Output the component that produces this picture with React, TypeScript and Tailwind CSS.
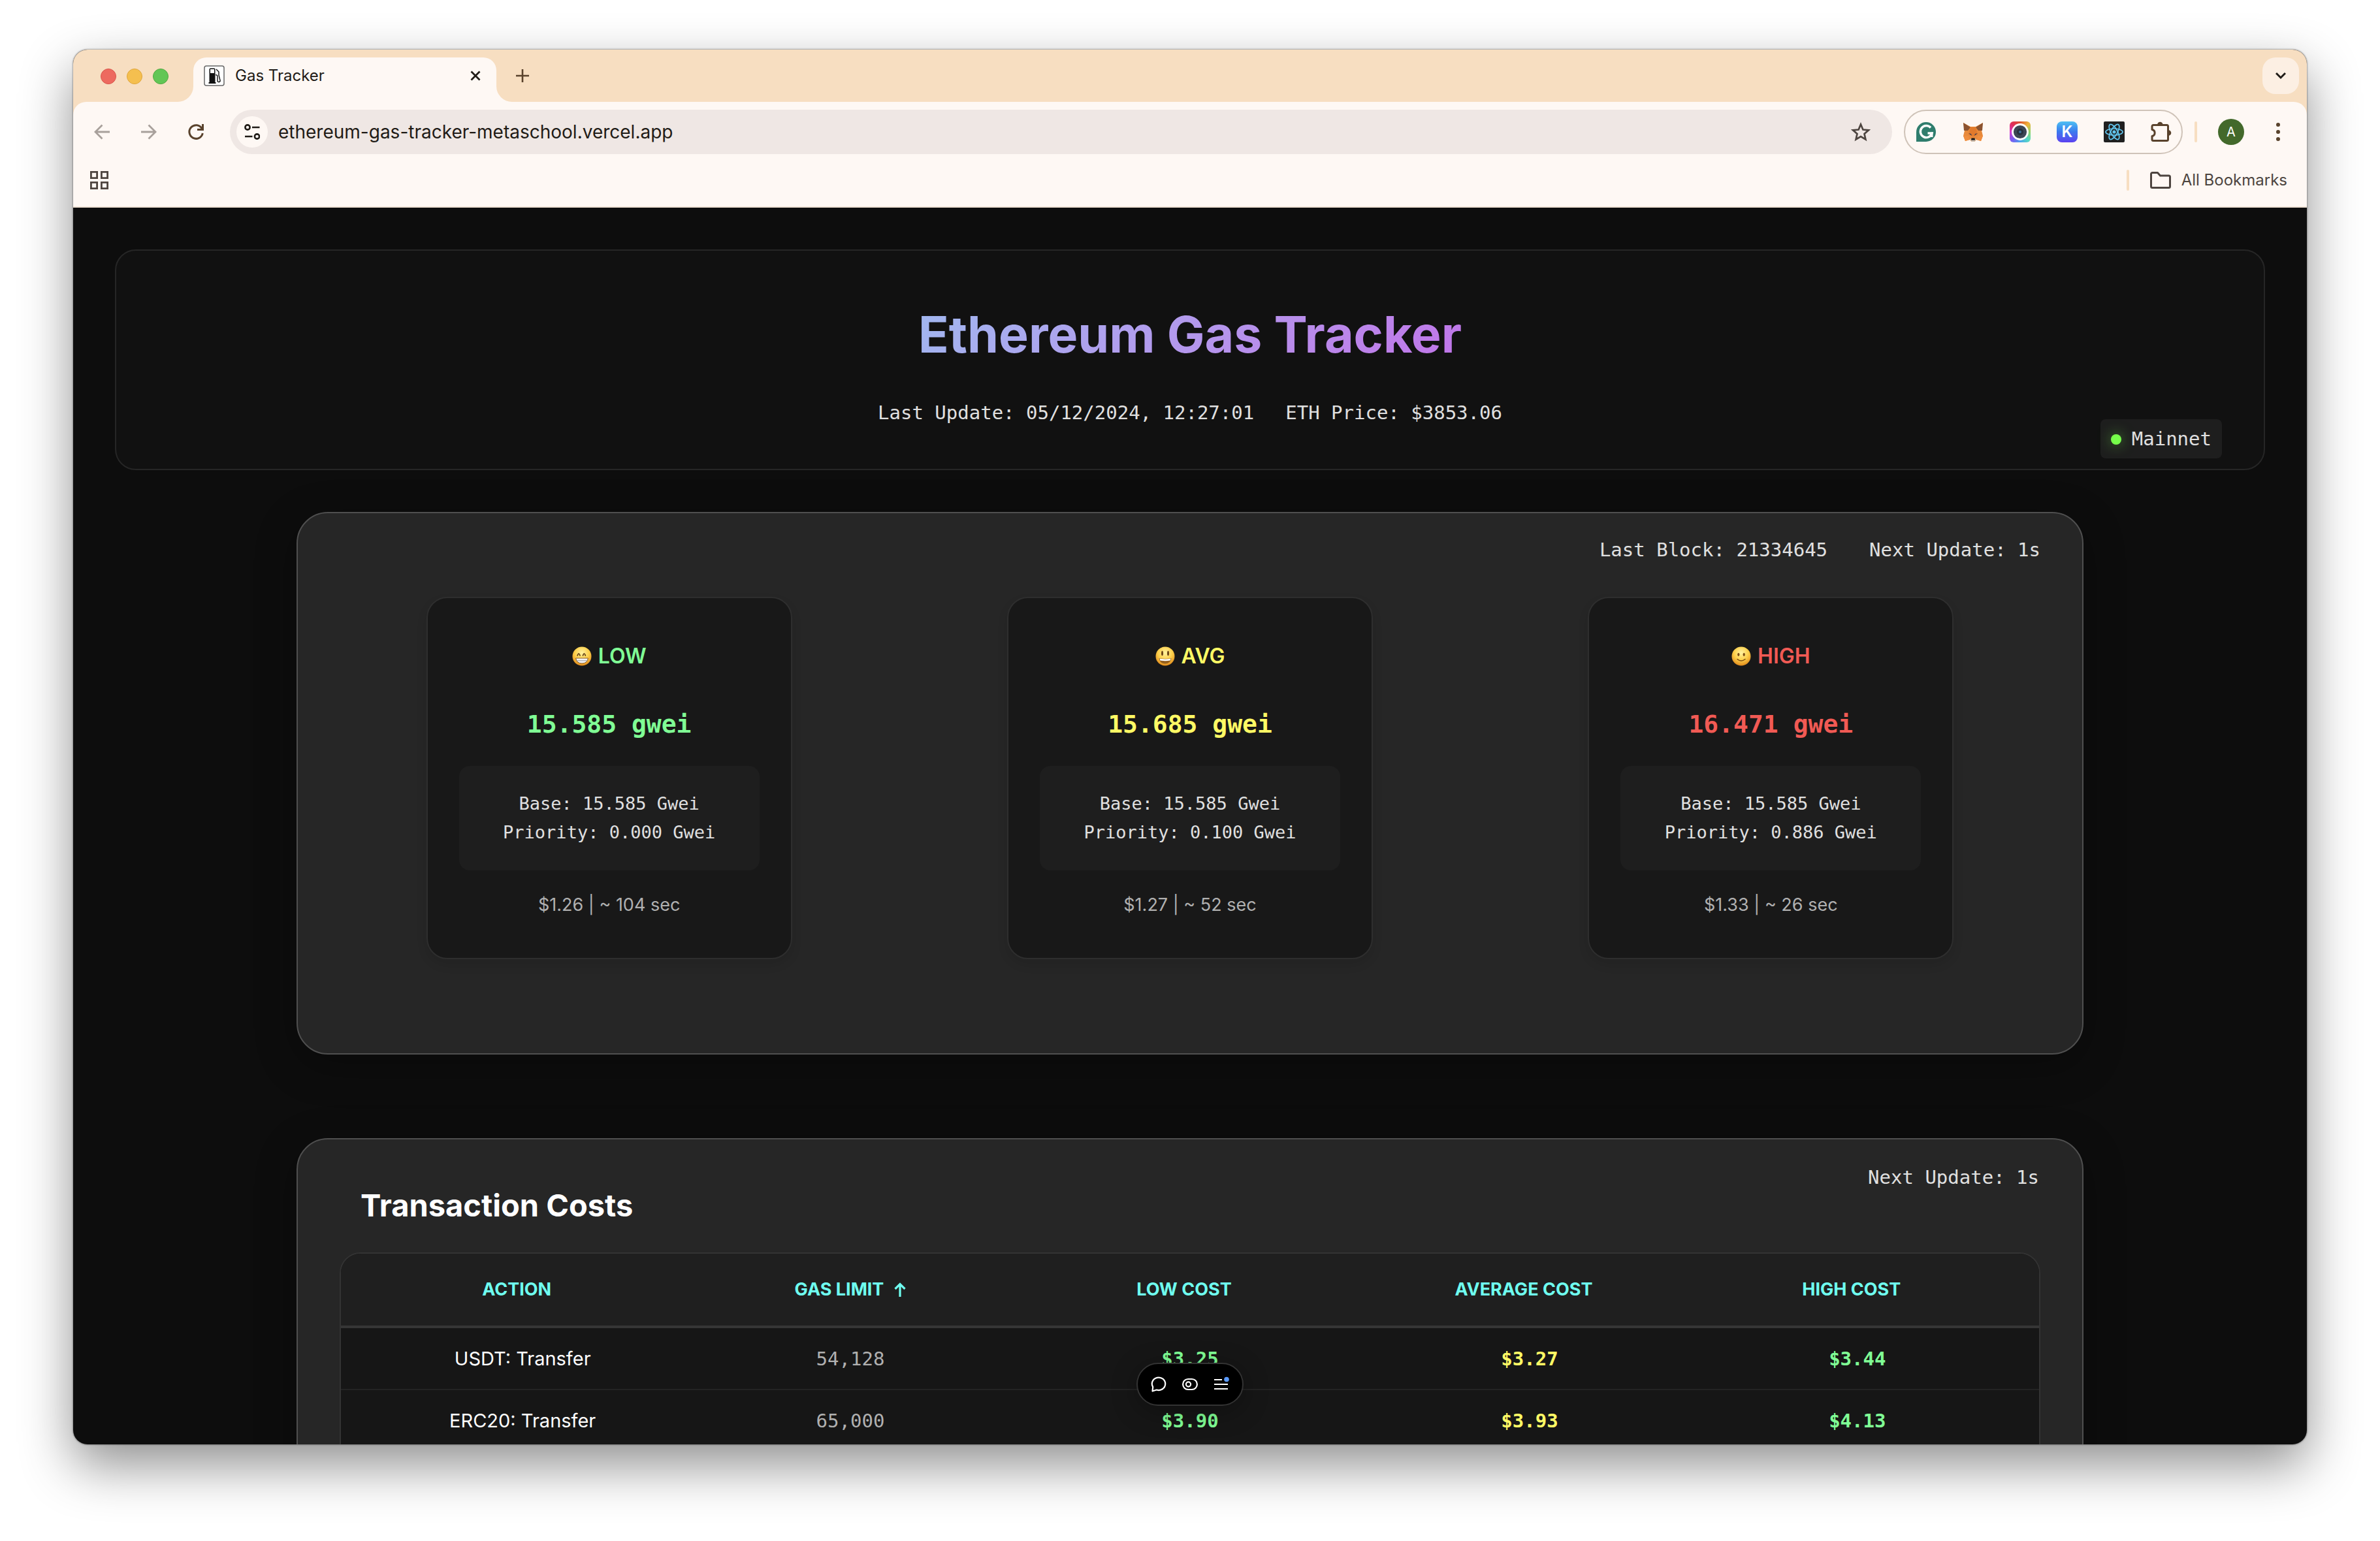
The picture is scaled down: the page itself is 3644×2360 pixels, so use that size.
import type { ReactNode } from "react";

type Tone = "green" | "yellow" | "red";

const toneText: Record<Tone, string> = {
  green: "text-[#80ff95]",
  yellow: "text-[#fffa65]",
  red: "text-[#f15a54]",
};

const mono = "font-['DejaVu_Sans_Mono',monospace]";

/* ---------- icons ---------- */

function FuelIcon() {
  return (
    <svg viewBox="0 0 32 32" className="size-8" aria-hidden="true">
      <rect x="1" y="1" width="30" height="30" rx="3" fill="#fff" stroke="#666" strokeWidth="1.5" />
      <rect x="8.5" y="4.5" width="9" height="22" rx="1.5" fill="#111" />
      <rect x="10" y="6" width="6" height="6" fill="#fff" />
      <rect x="7.500" y="26" width="11" height="2" fill="#111" />
      <path d="M19 6l4 4v5l2 8a2 2 0 0 1-4 1v-7a2 2 0 0 0-3-2" fill="none" stroke="#111" strokeWidth="1.400" />
    </svg>
  );
}

function BackIcon() {
  return (
    <svg viewBox="0 0 24 24" className="size-6" fill="none" stroke="#a8a09b" strokeWidth="2.800" aria-hidden="true">
      <path d="M24 12H2M12.500 1.500L2 12l10.500 10.500" />
    </svg>
  );
}

function ForwardIcon() {
  return (
    <svg viewBox="0 0 24 24" className="size-6" fill="none" stroke="#a8a09b" strokeWidth="2.800" aria-hidden="true">
      <path d="M0 12h22M11.500 1.500L22 12 11.500 22.500" />
    </svg>
  );
}

function ReloadIcon() {
  return (
    <svg viewBox="0 0 24 24" className="size-6" fill="none" stroke="#59422c" strokeWidth="3" aria-hidden="true">
      <path d="M21.200 7A10.300 10.300 0 1 0 22.300 14" />
      <path d="M22.500 0v8.500H14" />
    </svg>
  );
}

function SiteInfoIcon() {
  return (
    <svg viewBox="0 0 24 24" className="size-6" fill="none" stroke="#1f1b16" strokeWidth="2.600" aria-hidden="true">
      <circle cx="5" cy="5" r="3.600" />
      <path d="M12 5h11.500M1 19h11.500" />
      <circle cx="19.500" cy="19" r="3.600" />
    </svg>
  );
}

function StarIcon() {
  return (
    <svg viewBox="0 0 32 32" className="size-8" fill="none" stroke="#4d4540" strokeWidth="2.700" aria-hidden="true">
      <path d="M16 4.500l3.400 8 8.600.8-6.500 5.700 1.900 8.500L16 23l-7.400 4.500 1.900-8.500L4 13.300l8.600-.8z" />
    </svg>
  );
}

function GrammarlyIcon() {
  return (
    <svg viewBox="0 0 32 32" className="size-8" aria-hidden="true">
      <path d="M1 31V16A15 15 0 1 1 16 31z" fill="#2f7d6d" />
      <path d="M23 9.500A9 9 0 1 0 25 18h-6.500" fill="none" stroke="#fff" strokeWidth="3.400" />
      <path d="M25 16.500v7.500" stroke="#fff" strokeWidth="3" />
    </svg>
  );
}

function FoxIcon() {
  return (
    <svg viewBox="0 0 32 32" className="size-8" aria-hidden="true">
      <path d="M1 2l11 6h8l11-6-2 12 2 8-3 8-7-2-3 3h-4l-3-3-7 2-3-8 2-8z" fill="#e8893a" />
      <path d="M1 2l11 7-4 5-6 0zM31 2L20 9l4 5 6 0z" fill="#8b5330" />
      <path d="M1 22h8l1 6-6 2zM31 22h-8l-1 6 6 2z" fill="#ef8d3e" />
      <path d="M12 9h8l3 11-7 3-7-3z" fill="#e17a2c" />
      <path d="M9 18l4 1 1 3zM23 18l-4 1-1 3z" fill="#3b3b52" />
      <path d="M11 27l3-1h4l3 1-3 4h-4z" fill="#c9bcae" />
      <path d="M13.500 25.500h5l.5 3h-6z" fill="#161616" />
    </svg>
  );
}

function CameraIcon() {
  return (
    <span className="grid size-8 place-items-center rounded-md bg-[conic-gradient(from_45deg,#f0b23a,#8fd46a,#55d8c4,#4aa3f0,#7a5cf0,#d63ad0,#e0305a,#e0502a,#f0b23a)]">
      <svg viewBox="0 0 32 32" className="size-8" aria-hidden="true">
        <circle cx="16" cy="16" r="11.500" fill="#3c4654" stroke="#fff" strokeWidth="2.800" />
        <circle cx="16" cy="16" r="5" fill="#27313e" />
        <circle cx="16" cy="16" r="2" fill="#3f6f96" />
      </svg>
    </span>
  );
}

function ReactIcon() {
  return (
    <svg viewBox="0 0 32 32" className="size-8" aria-hidden="true">
      <rect width="32" height="32" rx="2" fill="#202020" />
      <g fill="none" stroke="#61c5ee" strokeWidth="1.700">
        <ellipse cx="16" cy="16" rx="13" ry="5" />
        <ellipse cx="16" cy="16" rx="13" ry="5" transform="rotate(60 16 16)" />
        <ellipse cx="16" cy="16" rx="13" ry="5" transform="rotate(120 16 16)" />
      </g>
      <circle cx="16" cy="16" r="2.600" fill="#61c5ee" />
    </svg>
  );
}

function PuzzleIcon() {
  return (
    <svg viewBox="0 0 34 32" className="h-8 w-[34px]" aria-hidden="true">
      <path
        d="M2 7.500A2 2 0 0 1 4 5.500H24.500a2 2 0 0 1 2 2V27.500a2 2 0 0 1-2 2H4a2 2 0 0 1-2-2V22.500C7.500 21.500 7.500 13.500 2 12.500z"
        fill="none"
        stroke="#59422c"
        strokeWidth="3"
        strokeLinejoin="round"
      />
      <path d="M10 5a4.300 4.300 0 0 1 8.600 0zM27 13.200a4.300 4.300 0 0 1 0 8.600z" fill="#59422c" />
    </svg>
  );
}

function DotsIcon() {
  return (
    <svg viewBox="0 0 8 28" className="h-7 w-2" fill="#59422c" aria-hidden="true">
      <circle cx="4" cy="3" r="3" />
      <circle cx="4" cy="14" r="3" />
      <circle cx="4" cy="25" r="3" />
    </svg>
  );
}

function GridIcon() {
  return (
    <svg viewBox="0 0 28 28" className="size-7" fill="none" stroke="#4d4540" strokeWidth="2.800" aria-hidden="true">
      <path d="M1.400 1.400h9.200v9.200H1.400zM17.400 1.400h9.200v9.200h-9.200zM1.400 17.400h9.200v9.200H1.400zM17.400 17.400h9.200v9.200h-9.200z" />
    </svg>
  );
}

function FolderIcon() {
  return (
    <svg viewBox="0 0 32 26" className="h-[26px] w-8" fill="none" stroke="#4d4540" strokeWidth="3" strokeLinejoin="round" aria-hidden="true">
      <path d="M1.500 3.500a2 2 0 0 1 2-2H11.500l4 4.500H28.500a2 2 0 0 1 2 2V22.500a2 2 0 0 1-2 2H3.500a2 2 0 0 1-2-2z" />
    </svg>
  );
}

type Mood = "grin" | "open" | "smile";

function Face({ mood }: { mood: Mood }) {
  return (
    <svg viewBox="0 0 30 30" className="size-[30px]" aria-hidden="true">
      <defs>
        <radialGradient id={`face-${mood}`} cx="50%" cy="32%" r="68%">
          <stop offset="0" stopColor="#fff3a0" />
          <stop offset="0.550" stopColor="#fccf4a" />
          <stop offset="1" stopColor="#e08a1c" />
        </radialGradient>
      </defs>
      <circle cx="15" cy="15" r="14.500" fill={`url(#face-${mood})`} />
      {mood === "grin" && (
        <>
          <path d="M8.200 14q1.800-6 3.800 0M16.500 14q1.800-6 3.800 0" fill="none" stroke="#5d3a12" strokeWidth="1.700" strokeLinecap="round" />
          <path d="M5.500 18H24.500q-1.500 8-9.500 8t-9.500-8z" fill="#f4f4f4" stroke="#8a5a20" strokeWidth="1" />
          <path d="M6.500 21.800h17" stroke="#9b9b9b" strokeWidth="1" />
        </>
      )}
      {mood === "open" && (
        <>
          <ellipse cx="10.500" cy="10.500" rx="1.500" ry="3.800" fill="#6b4414" />
          <ellipse cx="19.500" cy="10.500" rx="1.500" ry="3.800" fill="#6b4414" />
          <path d="M5.500 18Q15 20 24.500 18q-1.500 8.500-9.500 8.500t-9.500-8.500z" fill="#95601e" />
          <path d="M6.500 18.500q8.500 1.800 17 0l-.8 3q-7.700 1.500-15.400 0z" fill="#fff" />
        </>
      )}
      {mood === "smile" && (
        <>
          <ellipse cx="10.800" cy="12.500" rx="1.600" ry="2.400" fill="#7a4a12" />
          <ellipse cx="19.200" cy="12.500" rx="1.600" ry="2.400" fill="#7a4a12" />
          <path d="M9 19.500q6 5 12 0" fill="none" stroke="#7a4a12" strokeWidth="1.400" strokeLinecap="round" />
        </>
      )}
    </svg>
  );
}

/* ---------- browser chrome ---------- */

function TabFoot({ side }: { side: "left" | "right" }) {
  return (
    <svg viewBox="0 0 24 24" className="size-6 self-end" fill="#fef8f4" aria-hidden="true">
      {side === "left" ? <path d="M24 0v24H0A24 24 0 0 0 24 0z" /> : <path d="M0 0v24h24A24 24 0 0 1 0 0z" />}
    </svg>
  );
}

function TabStrip() {
  return (
    <div className="flex h-20 shrink-0 bg-[#f7dec1] pt-3 pr-3 pl-[42px]">
      <div className="flex h-[58px] items-center gap-4">
        <button aria-label="Close window" className="size-6 rounded-full border border-[#d9574c] bg-[#ed6a5f]" />
        <button aria-label="Minimize window" className="size-6 rounded-full border border-[#dfa63d] bg-[#f5bf4f]" />
        <button aria-label="Zoom window" className="size-6 rounded-full border border-[#52a843] bg-[#62c655]" />
      </div>
      <div className="ml-[14px] flex">
        <TabFoot side="left" />
        <div className="flex w-[464px] items-center rounded-t-[20px] bg-[#fef8f4] pr-5 pb-3 pl-4">
          <FuelIcon />
          <span className="ml-4 flex-1 text-2xl text-[#1f1b16]">Gas Tracker</span>
          <button aria-label="Close tab" className="grid size-6 place-items-center">
            <svg viewBox="0 0 16 16" className="size-4" stroke="#1f1b16" strokeWidth="2.800" aria-hidden="true">
              <path d="M1.500 1.500l13 13M14.500 1.500l-13 13" />
            </svg>
          </button>
        </div>
        <TabFoot side="right" />
      </div>
      <button aria-label="New tab" className="ml-[6px] grid h-14 w-5 place-items-center">
        <svg viewBox="0 0 20 20" className="size-5" stroke="#59422c" strokeWidth="2.600" aria-hidden="true">
          <path d="M10 0v20M0 10h20" />
        </svg>
      </button>
      <button aria-label="Search tabs" className="ml-auto grid size-14 place-items-center rounded-[20px] bg-[#fcefe3]">
        <svg viewBox="0 0 16 12" className="h-3 w-4" fill="none" stroke="#1f1b16" strokeWidth="3" aria-hidden="true">
          <path d="M1 2l7 7 7-7" />
        </svg>
      </button>
    </div>
  );
}

function ToolButton({ label, children }: { label: string; children: ReactNode }) {
  return (
    <button aria-label={label} className="grid h-12 w-8 place-items-center">
      {children}
    </button>
  );
}

function Toolbar() {
  return (
    <div className="bg-[#f7dec1]">
      <div className="flex h-[92px] items-center rounded-t-[20px] bg-[#fef8f4] pr-10 pl-7">
        <div className="flex gap-10">
          <ToolButton label="Back">
            <BackIcon />
          </ToolButton>
          <ToolButton label="Forward">
            <ForwardIcon />
          </ToolButton>
          <ToolButton label="Reload">
            <ReloadIcon />
          </ToolButton>
        </div>
        <div className="ml-9 flex h-[68px] flex-1 items-center rounded-full bg-[#efe7e4] pr-8 pl-[10px]">
          <button aria-label="View site information" className="grid size-12 place-items-center rounded-full bg-[#fef8f4]">
            <SiteInfoIcon />
          </button>
          <input
            aria-label="Address"
            readOnly
            value="ethereum-gas-tracker-metaschool.vercel.app"
            className="ml-4 flex-1 bg-transparent text-[28px] text-[#1f1b16] outline-none"
          />
          <button aria-label="Bookmark this page">
            <StarIcon />
          </button>
        </div>
        <div className="ml-[18px] flex h-[68px] items-center gap-10 rounded-full border-2 border-[#cfc3b8] pr-[13px] pl-4">
          <button aria-label="Grammarly">
            <GrammarlyIcon />
          </button>
          <button aria-label="MetaMask">
            <FoxIcon />
          </button>
          <button aria-label="Screen capture">
            <CameraIcon />
          </button>
          <button
            aria-label="Keplr"
            className="grid size-8 place-items-center rounded-lg bg-linear-to-b from-[#4fc0f2] via-[#3b78ee] to-[#5a3ff0] text-2xl leading-8 font-semibold text-white"
          >
            K
          </button>
          <button aria-label="React Developer Tools">
            <ReactIcon />
          </button>
          <button aria-label="Extensions">
            <PuzzleIcon />
          </button>
        </div>
        <div className="ml-[18px] h-8 w-1 rounded-full bg-[#f7dec1]" />
        <button aria-label="Profile" className="ml-8 size-10 rounded-full bg-[#43692b] text-xl text-white">
          A
        </button>
        <button aria-label="Menu" className="ml-12">
          <DotsIcon />
        </button>
      </div>
    </div>
  );
}

function BookmarksBar() {
  return (
    <div className="flex h-[70px] shrink-0 items-start border-b-2 border-[#f0e3d6] bg-[#fef8f4] pt-3 pr-[30px] pl-[26px]">
      <button aria-label="Tab groups" className="flex h-8 items-center">
        <GridIcon />
      </button>
      <div className="ml-auto h-8 w-1 rounded-full bg-[#f7dec1]" />
      <button className="ml-8 flex h-8 items-center gap-4 text-2xl text-[#4d4540]">
        <FolderIcon />
        All Bookmarks
      </button>
    </div>
  );
}

/* ---------- page ---------- */

function Header() {
  return (
    <header className="relative rounded-[32px] border-2 border-[#262626] bg-[#111] pt-20 pb-16 text-center">
      <h1 className="mx-auto w-fit bg-linear-135 from-[#a0b8f0] to-[#c074e8] bg-clip-text text-[77px] leading-[96px] font-bold text-transparent">
        Ethereum Gas Tracker
      </h1>
      <div className={`mt-[50px] flex justify-center gap-12 text-[29px] leading-[44px] text-[#e0e0e0] ${mono}`}>
        <span>Last Update: 05/12/2024, 12:27:01</span>
        <span>ETH Price: $3853.06</span>
      </div>
      <div
        className={`absolute right-16 bottom-4 flex h-[60px] items-center gap-4 rounded-lg bg-[#1e1e1e] px-4 pt-[2px] text-[29px] text-[#e0e0e0] ${mono}`}
      >
        <span className="size-4 rounded-full bg-[#76ff4a] shadow-[0_0_20px_#76ff4a80]" />
        Mainnet
      </div>
    </header>
  );
}

const panel =
  "mx-auto w-[2736px] max-w-full rounded-[48px] border-2 border-[#4f4f4f] bg-[#262626] shadow-[0_16px_64px_rgba(0,0,0,0.3)]";

interface GasTier {
  name: string;
  mood: Mood;
  tone: Tone;
  price: string;
  base: string;
  priority: string;
  usd: string;
  wait: string;
}

const tiers: GasTier[] = [
  { name: "LOW", mood: "grin", tone: "green", price: "15.585", base: "15.585", priority: "0.000", usd: "$1.26", wait: "104" },
  { name: "AVG", mood: "open", tone: "yellow", price: "15.685", base: "15.585", priority: "0.100", usd: "$1.27", wait: "52" },
  { name: "HIGH", mood: "smile", tone: "red", price: "16.471", base: "15.585", priority: "0.886", usd: "$1.33", wait: "26" },
];

function GasCard({ tier }: { tier: GasTier }) {
  return (
    <article className="w-[560px] rounded-[32px] border-2 border-[#2e2e2e] bg-[#181818] px-12 pt-16 pb-[59px] text-center shadow-[0_8px_16px_rgba(0,0,0,0.1)]">
      <h2 className={`flex items-center justify-center gap-[10px] text-[32px] leading-[50px] font-semibold ${toneText[tier.tone]}`}>
        <Face mood={tier.mood} />
        {tier.name}
      </h2>
      <p className={`mt-12 text-[38px] leading-[62px] font-bold ${mono} ${toneText[tier.tone]}`}>{tier.price} gwei</p>
      <div className={`mt-[33px] rounded-2xl bg-[#1e1e1e] py-9 text-[27px] leading-[44px] text-[#e0e0e0] ${mono}`}>
        <p>Base: {tier.base} Gwei</p>
        <p>Priority: {tier.priority} Gwei</p>
      </div>
      <p className="mt-[31px] text-[27px] leading-[44px] text-[#b0b0b0]">
        {tier.usd} | ~ {tier.wait} sec
      </p>
    </article>
  );
}

function GasPanel() {
  return (
    <section className={`mt-16 px-8 pt-[34px] pb-36 ${panel}`}>
      <div className={`flex justify-end gap-16 pr-8 text-[29px] leading-[44px] text-[#e0e0e0] ${mono}`}>
        <span>Last Block: 21334645</span>
        <span>Next Update: 1s</span>
      </div>
      <div className="mt-[50px] flex justify-around">
        {tiers.map((tier) => (
          <GasCard key={tier.name} tier={tier} />
        ))}
      </div>
    </section>
  );
}

const rows = [
  { action: "USDT: Transfer", limit: "54,128", low: "$3.25", avg: "$3.27", high: "$3.44" },
  { action: "ERC20: Transfer", limit: "65,000", low: "$3.90", avg: "$3.93", high: "$4.13" },
];

function CostsPanel() {
  return (
    <section className={`mt-32 px-16 pt-9 pb-16 ${panel}`}>
      <div className="flex items-start justify-between pl-8">
        <h2 className="mt-[35px] text-[47px] leading-[60px] font-bold text-white">Transaction Costs</h2>
        <span className={`pr-[2px] text-[29px] leading-[44px] text-[#e0e0e0] ${mono}`}>Next Update: 1s</span>
      </div>
      <div className="mt-[42px] overflow-hidden rounded-[32px] border-2 border-[#333] bg-[#161616] pb-12">
        <table className="w-full table-fixed text-center text-[29px] leading-[44px]">
          <thead>
            <tr className="h-28 border-b-4 border-[#363636] bg-[#1f1f1f] text-[27px] text-[#6ffff0]">
              <th className="w-[21.4%] pr-[18px] font-bold">ACTION</th>
              <th className="w-[17.2%] font-bold">
                <button className="inline-flex items-center gap-4">
                  GAS LIMIT
                  <svg viewBox="0 0 18 22" className="h-[22px] w-[18px]" fill="none" stroke="currentColor" strokeWidth="3.200" aria-hidden="true">
                    <path d="M9 22V3M1.500 10L9 2.500l7.500 7.500" />
                  </svg>
                </button>
              </th>
              <th className="w-[22.8%] pr-[18px] font-bold">LOW COST</th>
              <th className="w-[17.2%] pr-[18px] font-bold">AVERAGE COST</th>
              <th className="w-[21.4%] pr-[18px] font-bold">HIGH COST</th>
            </tr>
          </thead>
          <tbody>
            {rows.map((row) => (
              <tr key={row.action} className="h-24 border-b-2 border-[#232323]">
                <td className="text-white">{row.action}</td>
                <td className={`text-[#b0b0b0] ${mono}`}>{row.limit}</td>
                <td className={`font-bold text-[#80ff95] ${mono}`}>{row.low}</td>
                <td className={`font-bold text-[#fffa65] ${mono}`}>{row.avg}</td>
                <td className={`font-bold text-[#80ff95] ${mono}`}>{row.high}</td>
              </tr>
            ))}
          </tbody>
        </table>
      </div>
    </section>
  );
}

function FloatingToolbar() {
  return (
    <div className="absolute bottom-[59px] left-1/2 flex h-[66px] -translate-x-1/2 items-center gap-6 rounded-full border-2 border-[#333] bg-black px-5 shadow-[0_8px_40px_rgba(0,0,0,0.3)]">
      <button aria-label="Comments">
        <svg viewBox="0 0 24 24" className="size-6" fill="none" stroke="#fff" strokeWidth="2.200" strokeLinejoin="round" aria-hidden="true">
          <path d="M2.500 22.500L3.200 16.200A10.200 9.700 0 1 1 8.800 20.500Z" />
        </svg>
      </button>
      <button aria-label="Draft mode">
        <svg viewBox="0 0 24 24" className="size-6" fill="none" stroke="#fff" strokeWidth="2.200" aria-hidden="true">
          <rect x="1.100" y="4" width="21.800" height="16" rx="8" />
          <circle cx="9.500" cy="12" r="3.600" />
        </svg>
      </button>
      <button aria-label="Toolbar menu">
        <svg viewBox="0 0 24 24" className="size-6" stroke="#fff" strokeWidth="2.200" aria-hidden="true">
          <path d="M1 5h12M1 12h21M1 19h21" />
          <circle cx="20" cy="4.500" r="3.800" fill="#5b9bff" stroke="none" />
        </svg>
      </button>
    </div>
  );
}

export default function App() {
  return (
    <div className="flex h-screen bg-white px-28 pt-[76px] pb-[148px] font-['Inter',sans-serif]">
      <div className="relative flex min-w-0 flex-1 flex-col overflow-hidden rounded-[22px] bg-[#0d0d0d] shadow-[0_0_2px_1px_rgba(0,0,0,0.3),0_32px_80px_rgba(0,0,0,0.44)]">
        <TabStrip />
        <Toolbar />
        <BookmarksBar />
        <main className="min-h-0 flex-1 overflow-hidden px-16 pt-16">
          <Header />
          <GasPanel />
          <CostsPanel />
        </main>
        <FloatingToolbar />
      </div>
    </div>
  );
}
